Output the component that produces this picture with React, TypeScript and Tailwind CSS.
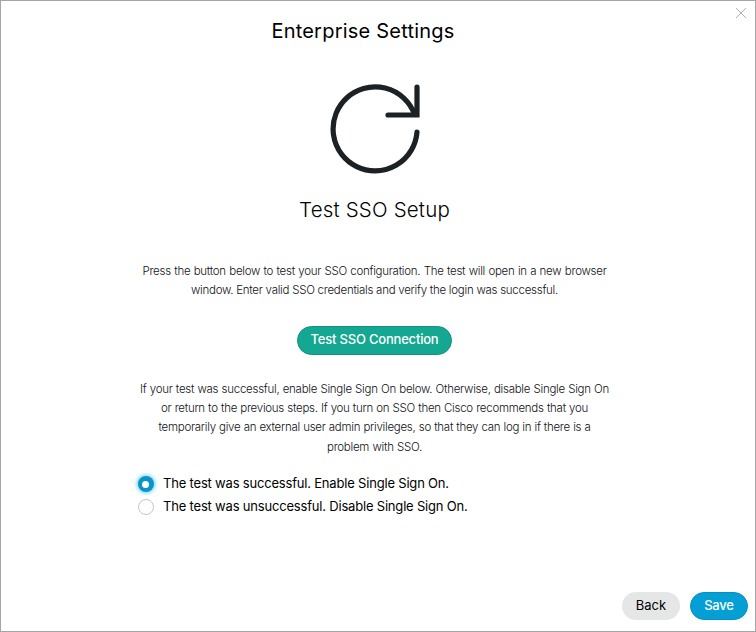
import React, { useState } from "react";

const intro = [
  { text: "Press the button below to test your SSO configuration. The test will open in a new browser", cls: "w-[464px]" },
  { text: "window. Enter valid SSO credentials and verify the login was successful.", cls: "w-[367px]" },
];

const advice = [
  { text: "If your test was successful, enable Single Sign On below. Otherwise, disable Single Sign On", cls: "w-[469px]" },
  { text: "or return to the previous steps. If you turn on SSO then Cisco recommends that you", cls: "w-[427px]" },
  { text: "temporarily give an external user admin privileges, so that they can log in if there is a", cls: "w-[432px]" },
  { text: "problem with SSO.", cls: "w-[95px]" },
];

function Paragraph({ lines }: { lines: { text: string; cls: string }[] }) {
  return (
    <p className="flex flex-col items-center text-[11.5px] leading-[19.2px] font-light text-[#101216]">
      {lines.map((l) => (
        <span key={l.text} className={`block whitespace-nowrap tracking-[-0.27px] [text-align-last:justify] ${l.cls}`}>
          {l.text}
        </span>
      ))}
    </p>
  );
}

function Radio({ label, checked, onSelect }: { label: string; checked: boolean; onSelect: () => void }) {
  return (
    <button type="button" role="radio" aria-checked={checked} onClick={onSelect} className="flex h-[22.5px] items-start text-left">
      <span
        className={
          checked
            ? "mt-[3px] flex size-4 items-center justify-center rounded-full bg-[#0a94c8] shadow-[0_0_4px_1px_#5fcdf0]"
            : "mt-[3px] size-4 rounded-full border border-[#c4c6c8] bg-white"
        }
      >
        {checked && <span className="size-[7px] rounded-full bg-white" />}
      </span>
      <span className="ml-[9.5px] text-[13px] leading-[20px] tracking-[-0.19px] whitespace-nowrap text-black">{label}</span>
    </button>
  );
}

export default function App() {
  const [choice, setChoice] = useState(0);
  return (
    <main className="relative flex h-[632px] w-[756px] flex-col items-center border border-[#a6a6a6] bg-white pr-[7px] font-['Inter','Liberation_Sans',sans-serif]">
      <button type="button" aria-label="Close" className="absolute top-[6px] right-[8px]">
        <svg width="12" height="12" viewBox="0 0 12 12" stroke="#a9afb8" strokeWidth="1">
          <path d="M1 1L11 11M11 1L1 11" />
        </svg>
      </button>
      <h1 className="mt-[15px] mr-[23px] text-[20px] leading-[30px] tracking-[0.22px] whitespace-nowrap text-black">Enterprise Settings</h1>
      <svg className="mt-[37px]" width="92" height="92" viewBox="0 0 92 92" fill="none" stroke="#1b2125" strokeWidth="5.2" strokeLinecap="round">
        <path d="M88 49A42 42 0 1 1 85.5 31.3" />
        <path d="M88 4.2V32H59" />
      </svg>
      <h2 className="mt-[20px] text-[20.5px] leading-[30px] font-light tracking-[0.18px] whitespace-nowrap text-black">Test SSO Setup</h2>
      <div className="mt-[36.5px]">
        <Paragraph lines={intro} />
      </div>
      <button type="button" className="mt-[26.5px] h-[29px] w-[155px] shrink-0 rounded-full border border-[#12917f] bg-[#14a792] pb-[3px] text-[13px] leading-[20px] font-medium tracking-[-0.2px] whitespace-nowrap text-white">
        Test SSO Connection
      </button>
      <div className="mt-[24.5px]">
        <Paragraph lines={advice} />
      </div>
      <div role="radiogroup" className="mt-[16.5px] ml-[6px] w-[480px]">
        <Radio label="The test was successful. Enable Single Sign On." checked={choice === 0} onSelect={() => setChoice(0)} />
        <Radio label="The test was unsuccessful. Disable Single Sign On." checked={choice === 1} onSelect={() => setChoice(1)} />
      </div>
      <footer className="mt-auto mb-[11px] flex gap-[10px] self-end text-[13px] leading-[20px]">
        <button type="button" className="h-[28px] w-[58px] rounded-full bg-[#e5e7e7] pb-[3px] text-black">Back</button>
        <button type="button" className="h-[28px] w-[58px] rounded-full border border-[#078fc4] bg-[#049fd4] pb-[3px] font-medium tracking-[-0.2px] text-white">Save</button>
      </footer>
    </main>
  );
}
